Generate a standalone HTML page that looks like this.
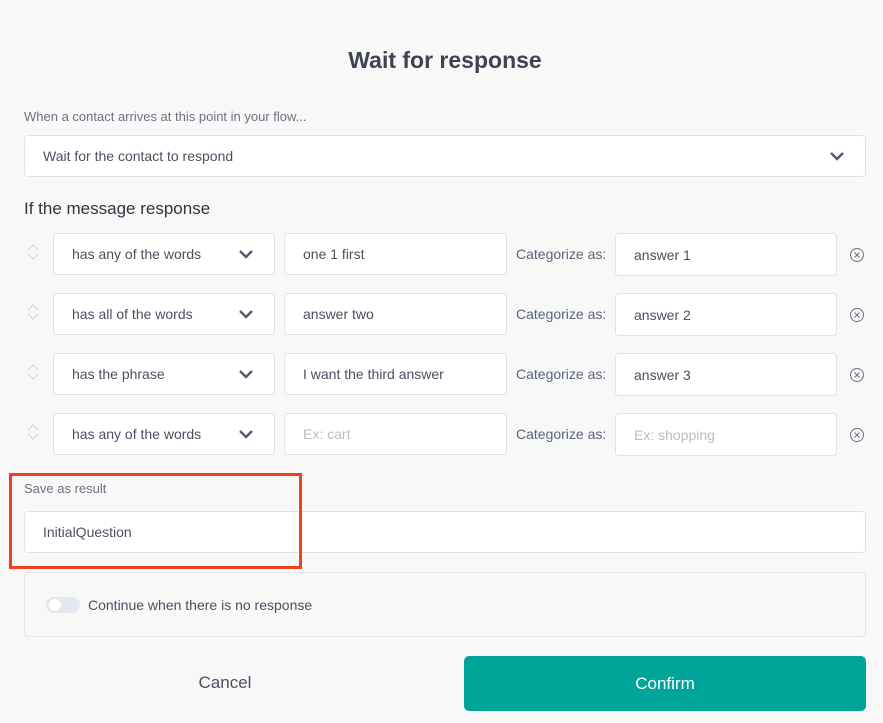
<!DOCTYPE html><html><head><style>
body{margin:0;width:883px;height:723px;background:#f8f8f9;font-family:"Liberation Sans",sans-serif;color:#4a5060;position:relative;overflow:hidden}
.a{position:absolute}
.box{position:absolute;background:#fff;border:1px solid #dfe2e8;border-radius:4px;box-sizing:border-box;font-size:14px;color:#4a5060;display:flex;align-items:center;padding-left:18px}
.ph{color:#b8bcc6}
.lab{position:absolute;font-size:14px;color:#5a6578}
.chev{position:absolute;right:20px;top:14px}
.sort{position:absolute;left:27px}
.x{position:absolute;left:849px}
</style></head><body>
<div class="a" style="left:0;width:890px;top:47px;text-align:center;font-size:23px;font-weight:bold;color:#3d4350">Wait for response</div>
<div class="lab" style="left:24px;top:109px;font-size:13px;color:#6a7280">When a contact arrives at this point in your flow...</div>
<div class="box" style="left:24px;top:135px;width:842px;height:42px">Wait for the contact to respond
<svg class="chev" width="16" height="12" viewBox="0 0 16 12"><path d="M2 3l6 6 6-6" stroke="#555b6e" stroke-width="2.4" fill="none"/></svg></div>
<div class="a" style="left:24px;top:199px;font-size:17px;color:#2e3440">If the message response</div>

<svg class="sort" style="top:243px" width="12" height="18" viewBox="0 0 12 18"><path d="M1 7l5-5 5 5M1 11l5 5 5-5" stroke="#cdd1d8" fill="none"/></svg>
<div class="box" style="left:53px;top:233px;width:222px;height:42px">has any of the words<svg class="chev" width="16" height="12" viewBox="0 0 16 12"><path d="M2 3l6 6 6-6" stroke="#555b6e" stroke-width="2.4" fill="none"/></svg></div>
<div class="box" style="left:284px;top:233px;width:223px;height:42px">one 1 first</div>
<div class="lab" style="left:516px;top:246px">Categorize as:</div>
<div class="box" style="left:615px;top:233px;width:222px;height:43px">answer 1</div>
<svg class="x" style="top:247px" width="16" height="16" viewBox="0 0 16 16"><circle cx="8" cy="8" r="6.5" stroke="#6a7280" fill="none"/><path d="M5.5 5.5l5 5M10.5 5.5l-5 5" stroke="#6a7280"/></svg>

<svg class="sort" style="top:303px" width="12" height="18" viewBox="0 0 12 18"><path d="M1 7l5-5 5 5M1 11l5 5 5-5" stroke="#cdd1d8" fill="none"/></svg>
<div class="box" style="left:53px;top:293px;width:222px;height:42px">has all of the words<svg class="chev" width="16" height="12" viewBox="0 0 16 12"><path d="M2 3l6 6 6-6" stroke="#555b6e" stroke-width="2.4" fill="none"/></svg></div>
<div class="box" style="left:284px;top:293px;width:223px;height:42px">answer two</div>
<div class="lab" style="left:516px;top:306px">Categorize as:</div>
<div class="box" style="left:615px;top:293px;width:222px;height:43px">answer 2</div>
<svg class="x" style="top:307px" width="16" height="16" viewBox="0 0 16 16"><circle cx="8" cy="8" r="6.5" stroke="#6a7280" fill="none"/><path d="M5.5 5.5l5 5M10.5 5.5l-5 5" stroke="#6a7280"/></svg>

<svg class="sort" style="top:363px" width="12" height="18" viewBox="0 0 12 18"><path d="M1 7l5-5 5 5M1 11l5 5 5-5" stroke="#cdd1d8" fill="none"/></svg>
<div class="box" style="left:53px;top:353px;width:222px;height:42px">has the phrase<svg class="chev" width="16" height="12" viewBox="0 0 16 12"><path d="M2 3l6 6 6-6" stroke="#555b6e" stroke-width="2.4" fill="none"/></svg></div>
<div class="box" style="left:284px;top:353px;width:223px;height:42px">I want the third answer</div>
<div class="lab" style="left:516px;top:366px">Categorize as:</div>
<div class="box" style="left:615px;top:353px;width:222px;height:43px">answer 3</div>
<svg class="x" style="top:367px" width="16" height="16" viewBox="0 0 16 16"><circle cx="8" cy="8" r="6.5" stroke="#6a7280" fill="none"/><path d="M5.5 5.5l5 5M10.5 5.5l-5 5" stroke="#6a7280"/></svg>

<svg class="sort" style="top:423px" width="12" height="18" viewBox="0 0 12 18"><path d="M1 7l5-5 5 5M1 11l5 5 5-5" stroke="#cdd1d8" fill="none"/></svg>
<div class="box" style="left:53px;top:413px;width:222px;height:42px">has any of the words<svg class="chev" width="16" height="12" viewBox="0 0 16 12"><path d="M2 3l6 6 6-6" stroke="#555b6e" stroke-width="2.4" fill="none"/></svg></div>
<div class="box ph" style="left:284px;top:413px;width:223px;height:42px">Ex: cart</div>
<div class="lab" style="left:516px;top:426px">Categorize as:</div>
<div class="box ph" style="left:615px;top:413px;width:222px;height:43px">Ex: shopping</div>
<svg class="x" style="top:427px" width="16" height="16" viewBox="0 0 16 16"><circle cx="8" cy="8" r="6.5" stroke="#6a7280" fill="none"/><path d="M5.5 5.5l5 5M10.5 5.5l-5 5" stroke="#6a7280"/></svg>

<div class="lab" style="left:24px;top:481px;font-size:13px;color:#6a7280">Save as result</div>
<div class="box" style="left:24px;top:511px;width:842px;height:42px">InitialQuestion</div>
<div class="a" style="left:9px;top:473px;width:293px;height:96px;border:3px solid #f0421c;box-sizing:border-box"></div>

<div class="a" style="left:24px;top:572px;width:842px;height:65px;border:1px solid #e2e5ea;border-radius:4px;box-sizing:border-box"></div>
<div class="a" style="left:46px;top:597px;width:34px;height:16px;border-radius:8px;background:#e3e7ee"></div>
<div class="a" style="left:49px;top:599px;width:12px;height:12px;border-radius:6px;background:#fff"></div>
<div class="lab" style="left:88px;top:597px;color:#4a5060">Continue when there is no response</div>

<div class="a" style="left:24px;top:673px;width:402px;text-align:center;font-size:17px;color:#4a5060">Cancel</div>
<div class="a" style="left:464px;top:656px;width:402px;height:55px;background:#00a59a;border-radius:5px;color:#fff;font-size:17px;display:flex;align-items:center;justify-content:center">Confirm</div>
</body></html>
